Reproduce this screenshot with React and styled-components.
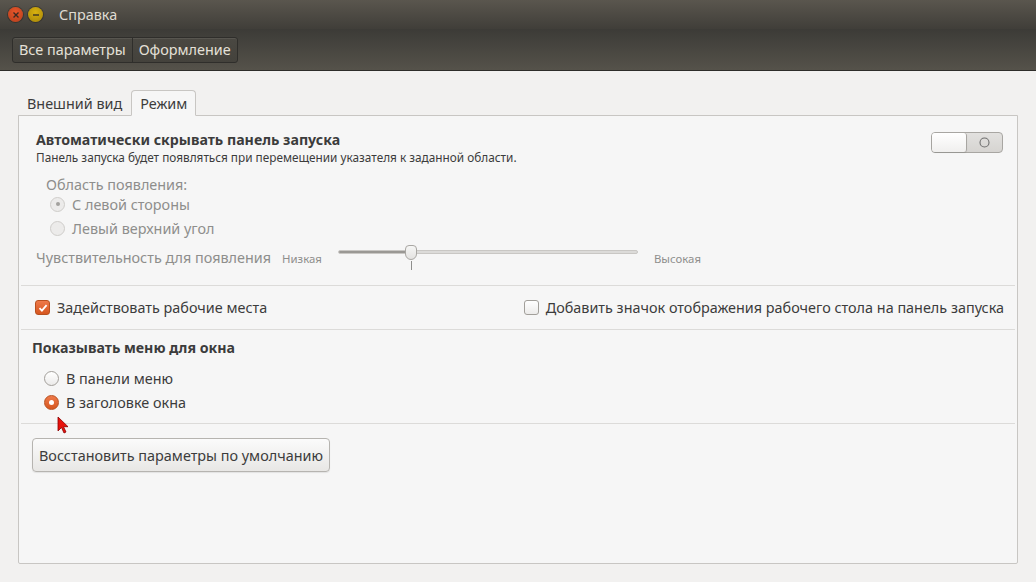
import styled, { createGlobalStyle } from "styled-components"

const Global = createGlobalStyle`
  html, body {
    margin: 0;
    padding: 0;
    background: #f2f1f0;
    font-family: "Noto Sans", "DejaVu Sans", sans-serif;
    color: #3c3c3c;
  }
  * { box-sizing: border-box; }
`

function App() {
  return (
    <Window>
      <Global />
      <TitleBar>
        <WinButton $color="#e9552a" $border="#b33f1c">
          <svg width="8" height="8" viewBox="0 0 8 8">
            <path d="M1.5 1.5l5 5M6.5 1.5l-5 5" stroke="#3a2a22" strokeWidth="1.4" />
          </svg>
        </WinButton>
        <WinButton $color="#d9b10f" $border="#a58508">
          <svg width="8" height="8" viewBox="0 0 8 8">
            <path d="M1 4h6" stroke="#3a3222" strokeWidth="1.4" />
          </svg>
        </WinButton>
        <Title>Справка</Title>
      </TitleBar>

      <Toolbar>
        <Crumbs>
          <Crumb>Все параметры</Crumb>
          <Crumb>Оформление</Crumb>
        </Crumbs>
      </Toolbar>

      <Body>
        <Tabs>
          <Tab>Внешний вид</Tab>
          <Tab $active>Режим</Tab>
        </Tabs>

        <Panel>
          <Section $pad="14px 12px 15px 15px">
            <HeadRow>
              <div>
                <Heading>Автоматически скрывать панель запуска</Heading>
                <Sub>Панель запуска будет появляться при перемещении указателя к заданной области.</Sub>
              </div>
              <Switch>
                <Knob />
                <SwitchOff>
                  <svg width="11" height="11" viewBox="0 0 11 11">
                    <circle cx="5.5" cy="5.5" r="4.5" fill="none" stroke="#6e6e6e" strokeWidth="1.1" />
                  </svg>
                </SwitchOff>
              </Switch>
            </HeadRow>

            <Group>
              <Label $disabled>Область появления:</Label>
              <RadioRow $disabled $indent="4px">
                <Radio $disabled $checked />
                С левой стороны
              </RadioRow>
              <RadioRow $disabled $indent="4px">
                <Radio $disabled />
                Левый верхний угол
              </RadioRow>
            </Group>

            <SliderRow>
              <Label $disabled>Чувствительность для появления</Label>
              <Small>Низкая</Small>
              <Slider>
                <Track>
                  <Fill style={{ width: "24.5%" }} />
                </Track>
                <Thumb style={{ left: "24.5%" }} />
                <Tick style={{ left: "24.5%" }} />
              </Slider>
              <Small>Высокая</Small>
            </SliderRow>
          </Section>

          <Divider />

          <CheckRow>
            <CheckItem>
              <Check $checked>
                <svg width="10" height="10" viewBox="0 0 10 10">
                  <path d="M1.5 5.2l2.4 2.4L8.6 2.2" fill="none" stroke="#fff" strokeWidth="1.8" />
                </svg>
              </Check>
              Задействовать рабочие места
            </CheckItem>
            <CheckItem>
              <Check />
              Добавить значок отображения рабочего стола на панель запуска
            </CheckItem>
          </CheckRow>

          <Divider />

          <Section $pad="8px 14px 10px 11px">
            <Heading>Показывать меню для окна</Heading>
            <MenuGroup>
              <RadioRow $indent="12px">
                <Radio />
                В панели меню
              </RadioRow>
              <RadioRow $indent="12px">
                <Radio $checked $accent />
                В заголовке окна
              </RadioRow>
            </MenuGroup>
          </Section>

          <Divider />

          <Section $pad="14px 14px 15px 11px">
            <Button>Восстановить параметры по умолчанию</Button>
          </Section>

          <Cursor width="12" height="18" viewBox="0 0 12 18">
            <path d="M1 1v14l3.5-3.5 2.5 5.5 2-1-2.5-5.3H11z" fill="#e8120c" stroke="#8a0000" strokeWidth="0.8" />
          </Cursor>
        </Panel>
      </Body>
    </Window>
  )
}

const Window = styled.div`
  width: 1036px;
  height: 582px;
  display: flex;
  flex-direction: column;
  overflow: hidden;
`

const TitleBar = styled.div`
  height: 29px;
  display: flex;
  align-items: center;
  padding-left: 8px;
  gap: 5px;
  background: linear-gradient(#5a564e, #403e39);
`

const WinButton = styled.div`
  width: 15px;
  height: 15px;
  border-radius: 50%;
  background: radial-gradient(circle at 50% 35%, ${(p) => p.$color}, ${(p) => p.$border});
  box-shadow: 0 0 0 1px rgba(0, 0, 0, 0.25);
  display: flex;
  align-items: center;
  justify-content: center;
`

const Title = styled.div`
  margin-left: 11px;
  font-size: 14.4px;
  color: #dfdbd2;
`

const Toolbar = styled.div`
  height: 42px;
  display: flex;
  align-items: center;
  padding-left: 12px;
  background: linear-gradient(#3c3b37, #55524a);
  border-bottom: 1px solid #2e2d2a;
`

const Crumbs = styled.div`
  display: flex;
  height: 26px;
  border: 1px solid #2f2e2b;
  border-radius: 3px;
  background: linear-gradient(#4a4842, #44423c);
  box-shadow: inset 0 1px 0 rgba(255, 255, 255, 0.08);
`

const Crumb = styled.div`
  display: flex;
  align-items: center;
  padding: 0 6px;
  font-size: 14.4px;
  color: #e4e0d8;
  & + & {
    border-left: 1px solid #2f2e2b;
  }
`

const Body = styled.div`
  flex: 1;
  padding: 19px 18px 18px 18px;
  display: flex;
  flex-direction: column;
`

const Tabs = styled.div`
  display: flex;
  height: 26px;
  align-items: flex-end;
  margin-bottom: -1px;
  position: relative;
  z-index: 1;
`

const Tab = styled.div`
  height: 26px;
  display: flex;
  align-items: center;
  padding: 0 8px 0 8px;
  font-size: 14.4px;
  color: #3c3c3c;
  border: 1px solid ${(p) => (p.$active ? "#c8c6c3" : "transparent")};
  border-bottom-color: ${(p) => (p.$active ? "#f6f6f6" : "#c8c6c3")};
  border-radius: 4px 4px 0 0;
  background: ${(p) => (p.$active ? "#f6f6f6" : "transparent")};
`

const Panel = styled.div`
  flex: 1;
  position: relative;
  background: #f6f6f6;
  border: 1px solid #c8c6c3;
  border-radius: 0 0 2px 2px;
  padding: 0 2px;
`

const Section = styled.div`
  padding: ${(p) => p.$pad};
`

const HeadRow = styled.div`
  display: flex;
  justify-content: space-between;
  align-items: flex-start;
`

const Heading = styled.div`
  font-size: 14.2px;
  font-weight: 700;
  color: #3c3c3c;
  line-height: 20px;
`

const Sub = styled.div`
  font-size: 11.8px;
  color: #3c3c3c;
  line-height: 15px;
`

const Switch = styled.div`
  width: 72px;
  height: 21px;
  margin-top: 2px;
  border: 1px solid #a8a6a2;
  border-radius: 4px;
  background: linear-gradient(#e2e1df, #d6d4d1);
  display: flex;
`

const Knob = styled.div`
  width: 35px;
  height: 100%;
  border-radius: 3px;
  background: linear-gradient(#ffffff, #f0efee);
  border-right: 1px solid #a8a6a2;
  box-shadow: 0 1px 1px rgba(0, 0, 0, 0.1);
`

const SwitchOff = styled.div`
  flex: 1;
  display: flex;
  align-items: center;
  justify-content: center;
`

const Group = styled.div`
  margin-top: 14px;
  padding-left: 10px;
  display: flex;
  flex-direction: column;
  gap: 2px;
`

const Label = styled.div`
  font-size: 14.4px;
  line-height: 12px;
  color: ${(p) => (p.$disabled ? "#8e8e8c" : "#3c3c3c")};
  white-space: nowrap;
`

const RadioRow = styled.div`
  display: flex;
  align-items: center;
  gap: 7px;
  height: 22px;
  padding-left: ${(p) => p.$indent};
  font-size: 14.4px;
  color: ${(p) => (p.$disabled ? "#8e8e8c" : "#3c3c3c")};
`

const Radio = styled.span`
  width: 15px;
  height: 15px;
  border-radius: 50%;
  flex: none;
  position: relative;
  border: 1px solid ${(p) => (p.$accent ? "#b8501f" : p.$disabled ? "#cfcdca" : "#a29f9a")};
  background: ${(p) =>
    p.$accent
      ? "linear-gradient(#ee7a4a, #d6561f)"
      : p.$disabled
      ? "#ecebea"
      : "linear-gradient(#ffffff, #ecebea)"};
  &::after {
    content: "";
    display: ${(p) => (p.$checked ? "block" : "none")};
    position: absolute;
    left: 50%;
    top: 50%;
    width: ${(p) => (p.$accent ? "5px" : "4px")};
    height: ${(p) => (p.$accent ? "5px" : "4px")};
    margin: ${(p) => (p.$accent ? "-2.5px" : "-2px")};
    border-radius: 50%;
    background: ${(p) => (p.$accent ? "#ffffff" : "#a3a19e")};
  }
`

const SliderRow = styled.div`
  display: flex;
  align-items: center;
  margin-top: 7px;
  height: 24px;
`

const Small = styled.div`
  font-size: 11.4px;
  color: #8e8e8c;
  margin-left: 11px;
  &:last-child {
    margin-left: 16px;
  }
`

const Slider = styled.div`
  position: relative;
  width: 300px;
  height: 24px;
  margin-left: 16px;
  display: flex;
  align-items: center;
`

const Track = styled.div`
  width: 100%;
  height: 4px;
  margin-top: -12px;
  border-radius: 2px;
  background: #dcdbd9;
  border: 1px solid #c9c7c4;
  overflow: hidden;
`

const Fill = styled.div`
  height: 100%;
  background: #9a9894;
`

const Thumb = styled.div`
  position: absolute;
  top: -1px;
  width: 12px;
  height: 15px;
  margin-left: -6px;
  border: 1px solid #a9a7a3;
  border-radius: 4px 4px 6px 6px;
  background: linear-gradient(#f6f6f5, #e4e3e1);
`

const Tick = styled.div`
  position: absolute;
  top: 15px;
  width: 1px;
  height: 9px;
  background: #8e8e8c;
`

const Divider = styled.div`
  height: 1px;
  background: #dcdbd9;
`

const CheckRow = styled.div`
  display: flex;
  justify-content: space-between;
  align-items: center;
  height: 43px;
  padding: 0 11px 0 14px;
`

const CheckItem = styled.div`
  display: flex;
  align-items: center;
  gap: 7px;
  font-size: 14.4px;
  color: #3c3c3c;
`

const Check = styled.span`
  width: 15px;
  height: 15px;
  border-radius: 3px;
  display: flex;
  align-items: center;
  justify-content: center;
  border: 1px solid ${(p) => (p.$checked ? "#b8501f" : "#a29f9a")};
  background: ${(p) => (p.$checked ? "linear-gradient(#ee7a4a, #d6561f)" : "linear-gradient(#ffffff, #ecebea)")};
`

const MenuGroup = styled.div`
  margin-top: 9px;
  display: flex;
  flex-direction: column;
  gap: 2px;
`

const Button = styled.button`
  height: 34px;
  padding: 0 6px;
  font-family: inherit;
  font-size: 14.4px;
  color: #3c3c3c;
  border: 1px solid #b6b4b0;
  border-radius: 4px;
  background: linear-gradient(#fbfbfb, #e8e7e5);
  box-shadow: 0 1px 1px rgba(0, 0, 0, 0.08);
`

const Cursor = styled.svg`
  position: absolute;
  left: 38px;
  top: 300px;
`

export default App
